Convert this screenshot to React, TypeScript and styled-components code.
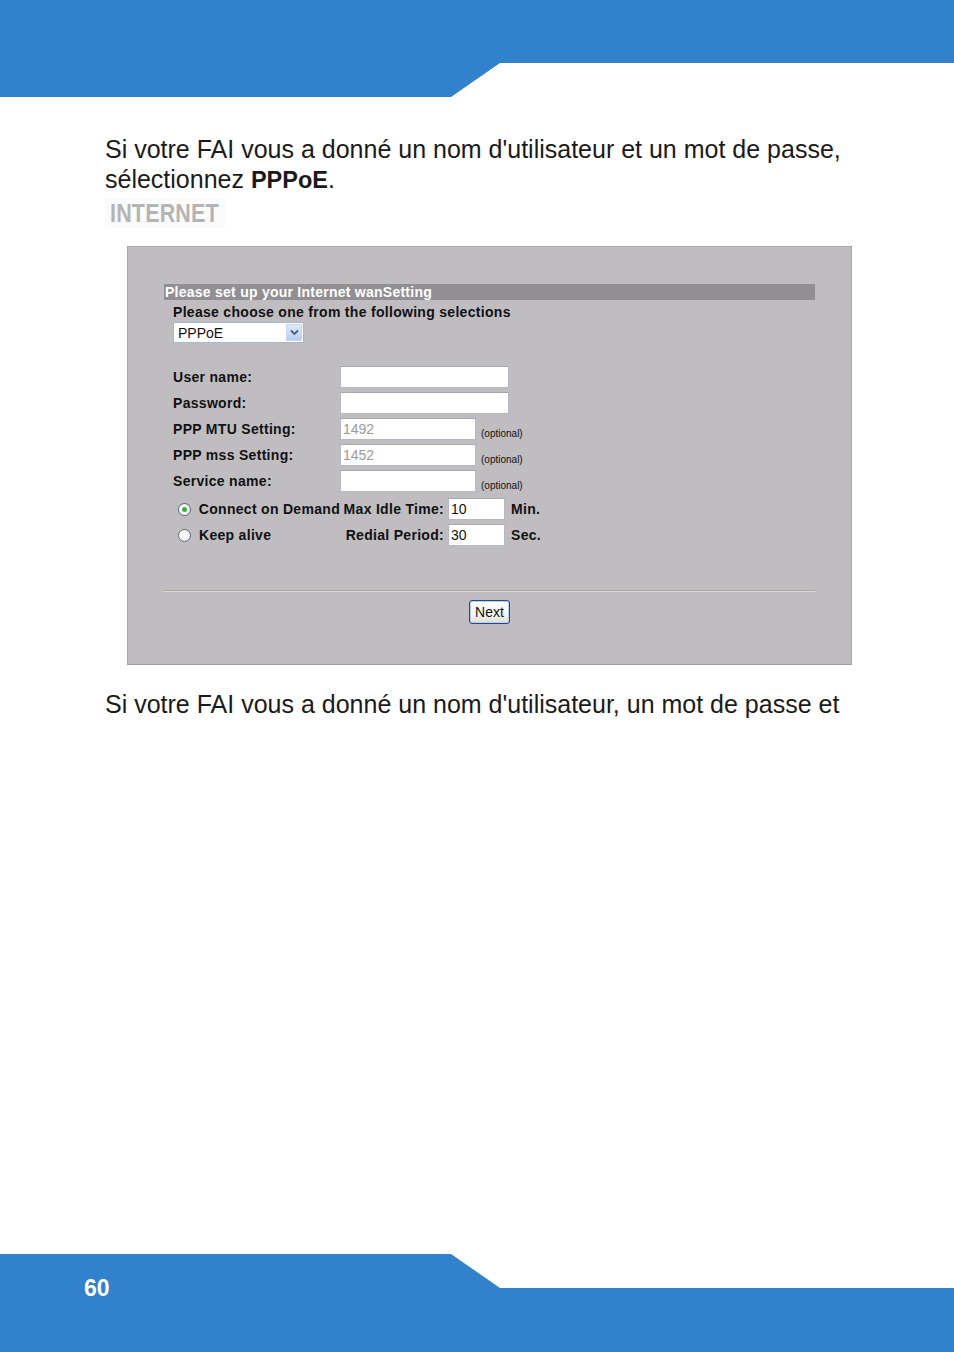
import styled, { createGlobalStyle } from 'styled-components';

const GlobalStyle = createGlobalStyle`
    html, body {
        margin: 0;
        padding: 0;
        background: #ffffff;
    }
    body {
        font-family: "Liberation Sans", Arial, sans-serif;
    }
`;

const Page = styled.div`
    width: 954px;
    min-height: 1352px;
    display: flex;
    flex-direction: column;
    overflow: hidden;
`;

const HeaderBand = styled.div`
    height: 97px;
    background: #3181cb;
    clip-path: polygon(0 0, 954px 0, 954px 63px, 500px 63px, 451px 97px, 0 97px);
`;

const Content = styled.main`
    padding: 37px 0 0 105px;
    display: flex;
    flex-direction: column;
`;

const Paragraph = styled.p<{ $gap?: number }>`
    margin: ${p => p.$gap ?? 0}px 0 0 0;
    font-size: 25px;
    line-height: 30px;
    height: ${p => (p.$gap ? 30 : 60)}px;
    color: #1a1a1a;
    width: 800px;

    b {
        font-weight: bold;
        font-size: 23.5px;
        line-height: 1;
    }
`;

const SectionTag = styled.div`
    margin: 4px 0 0 0;
    width: 120px;
    height: 30px;
    background: #fbfbfb;
    display: flex;
    align-items: center;
    padding-left: 5px;
    box-sizing: border-box;

    span {
        display: inline-block;
        font-weight: bold;
        font-size: 25px;
        color: #b4b4b4;
        transform: scaleX(0.86);
        transform-origin: left center;
        letter-spacing: 0.2px;
    }
`;

const Panel = styled.section`
    margin: 18px 0 0 22px;
    width: 725px;
    height: 419px;
    box-sizing: border-box;
    background: #c0bdc1;
    border: 1px solid #a9a7aa;
    border-bottom-color: #9e9c9f;
    padding: 37px 36px 0 36px;
    display: flex;
    flex-direction: column;
    font-family: "Liberation Sans", Arial, sans-serif;
    color: #111;
`;

const TitleBar = styled.div`
    height: 16px;
    background: #928f94;
    color: #ffffff;
    font-weight: bold;
    font-size: 14px;
    line-height: 16px;
    padding-left: 1px;
    letter-spacing: 0.25px;
`;

const Block = styled.div`
    padding-left: 9px;
    display: flex;
    flex-direction: column;
`;

const Heading = styled.div`
    font-weight: bold;
    font-size: 14px;
    line-height: 20px;
    margin-top: 2px;
    letter-spacing: 0.3px;
`;

const SelectBox = styled.div`
    width: 131px;
    height: 21px;
    box-sizing: border-box;
    background: #ffffff;
    border: 1px solid #a5b7cb;
    display: flex;
    align-items: center;
    justify-content: space-between;
    font-size: 14px;
    color: #111;
    padding-left: 4px;
`;

const SelectArrow = styled.div`
    width: 16px;
    height: 17px;
    margin-right: 1px;
    background: linear-gradient(#dfe9fb, #b9cdf1);
    border: 1px solid #c6d6f2;
    box-sizing: border-box;
    display: flex;
    align-items: center;
    justify-content: center;
`;

const Fields = styled.div`
    margin-top: 23px;
    display: grid;
    grid-template-columns: 167px 1fr;
    grid-auto-rows: 22px;
    row-gap: 4px;
    align-items: center;
`;

const Label = styled.div`
    font-weight: bold;
    font-size: 14px;
    letter-spacing: 0.3px;
`;

const FieldCell = styled.div`
    display: flex;
    align-items: center;
`;

const TextInput = styled.div<{ $w: number }>`
    width: ${p => p.$w}px;
    height: 22px;
    box-sizing: border-box;
    background: #ffffff;
    border: 1px solid #b8b8c4;
    border-top-color: #a7a7b3;
    font-size: 14px;
    font-weight: normal;
    letter-spacing: 0;
    line-height: 20px;
    padding-left: 2px;
    color: #111;
`;

const Placeholder = styled.span`
    color: #9a9a9a;
`;

const Optional = styled.span`
    font-size: 10px;
    margin: 8px 0 0 5px;
    color: #111;
`;

const ChoiceRows = styled.div`
    margin-top: 6px;
    display: grid;
    grid-template-columns: 167px auto;
    grid-auto-rows: 22px;
    row-gap: 4px;
    align-items: center;
`;

const RadioLabel = styled.div`
    display: flex;
    align-items: center;
    gap: 8px;
    padding-left: 5px;
    font-weight: bold;
    font-size: 14px;
    white-space: nowrap;
    letter-spacing: 0.3px;
`;

const Radio = styled.span<{ $checked?: boolean }>`
    width: 11px;
    height: 11px;
    border-radius: 50%;
    border: 1px solid #5d6c82;
    background: radial-gradient(circle at 35% 35%, #ffffff 30%, #dfe0e6 100%);
    display: flex;
    align-items: center;
    justify-content: center;

    &::after {
        content: '';
        width: 5px;
        height: 5px;
        border-radius: 50%;
        background: ${p => (p.$checked ? '#3fae3a' : 'transparent')};
    }
`;

const TimerGroup = styled.div`
    display: flex;
    align-items: center;
    font-weight: bold;
    font-size: 14px;
    letter-spacing: 0.3px;
`;

const TimerLabel = styled.span`
    width: 108px;
    text-align: right;
    padding-right: 4px;
    box-sizing: border-box;
    white-space: nowrap;
`;

const Unit = styled.span`
    margin-left: 6px;
`;

const Separator = styled.hr`
    margin: 44px 0 0 0;
    border: 0;
    border-top: 1px solid #a9a5a4;
    border-bottom: 1px solid #dcd9d6;
    height: 0;
`;

const ButtonRow = styled.div`
    display: flex;
    justify-content: center;
    margin-top: 8px;
`;

const NextButton = styled.button`
    width: 41px;
    height: 24px;
    box-sizing: border-box;
    border: 1px solid #1f4a8a;
    border-radius: 3px;
    background: linear-gradient(#ffffff, #f2f2ee 70%, #dcdcd4);
    box-shadow: inset 0 0 0 1px #b8cdf0;
    font-family: "Liberation Sans", Arial, sans-serif;
    font-size: 14px;
    color: #111;
    padding: 0;
`;

const FooterBand = styled.footer`
    margin-top: auto;
    height: 98px;
    background: #3181cb;
    clip-path: polygon(0 0, 451px 0, 500px 34px, 954px 34px, 954px 98px, 0 98px);
    box-sizing: border-box;
    padding: 21px 0 0 84px;
`;

const PageNumber = styled.span`
    color: #ffffff;
    font-weight: bold;
    font-size: 23px;
`;

const ChevronDown = () => (
    <svg width="9" height="7" viewBox="0 0 9 7">
        <path d="M1 1.5 L4.5 5 L8 1.5" fill="none" stroke="#4d6185" strokeWidth="1.8" />
    </svg>
);

const fields = [
    { label: 'User name:', width: 169, value: '', optional: false },
    { label: 'Password:', width: 169, value: '', optional: false },
    { label: 'PPP MTU Setting:', width: 136, value: '1492', optional: true },
    { label: 'PPP mss Setting:', width: 136, value: '1452', optional: true },
    { label: 'Service name:', width: 136, value: '', optional: true },
];

const App = () => {
    return (
        <Page>
            <GlobalStyle />
            <HeaderBand />
            <Content>
                <Paragraph>
                    <span>Si votre FAI vous a donné un nom d'utilisateur et un mot de passe,</span>
                    <br />
                    <span>sélectionnez </span><b>PPPoE</b>.
                </Paragraph>
                <SectionTag><span>INTERNET</span></SectionTag>
                <Panel>
                    <TitleBar>Please set up your Internet wanSetting</TitleBar>
                    <Block>
                        <Heading>Please choose one from the following selections</Heading>
                        <SelectBox>
                            PPPoE
                            <SelectArrow><ChevronDown /></SelectArrow>
                        </SelectBox>
                        <Fields>
                            {fields.map(f => [
                                <Label key={f.label + '-l'}>{f.label}</Label>,
                                <FieldCell key={f.label + '-f'}>
                                    <TextInput $w={f.width}>
                                        {f.value && <Placeholder>{f.value}</Placeholder>}
                                    </TextInput>
                                    {f.optional && <Optional>(optional)</Optional>}
                                </FieldCell>,
                            ])}
                        </Fields>
                        <ChoiceRows>
                            <RadioLabel><Radio $checked />Connect on Demand</RadioLabel>
                            <TimerGroup>
                                <TimerLabel>Max Idle Time:</TimerLabel>
                                <TextInput $w={57}>10</TextInput>
                                <Unit>Min.</Unit>
                            </TimerGroup>
                            <RadioLabel><Radio />Keep alive</RadioLabel>
                            <TimerGroup>
                                <TimerLabel>Redial Period:</TimerLabel>
                                <TextInput $w={57}>30</TextInput>
                                <Unit>Sec.</Unit>
                            </TimerGroup>
                        </ChoiceRows>
                    </Block>
                    <Separator />
                    <ButtonRow>
                        <NextButton>Next</NextButton>
                    </ButtonRow>
                </Panel>
                <Paragraph $gap={24}>
                    Si votre FAI vous a donné un nom d'utilisateur, un mot de passe et
                </Paragraph>
            </Content>
            <FooterBand>
                <PageNumber>60</PageNumber>
            </FooterBand>
        </Page>
    );
};

export default App;
